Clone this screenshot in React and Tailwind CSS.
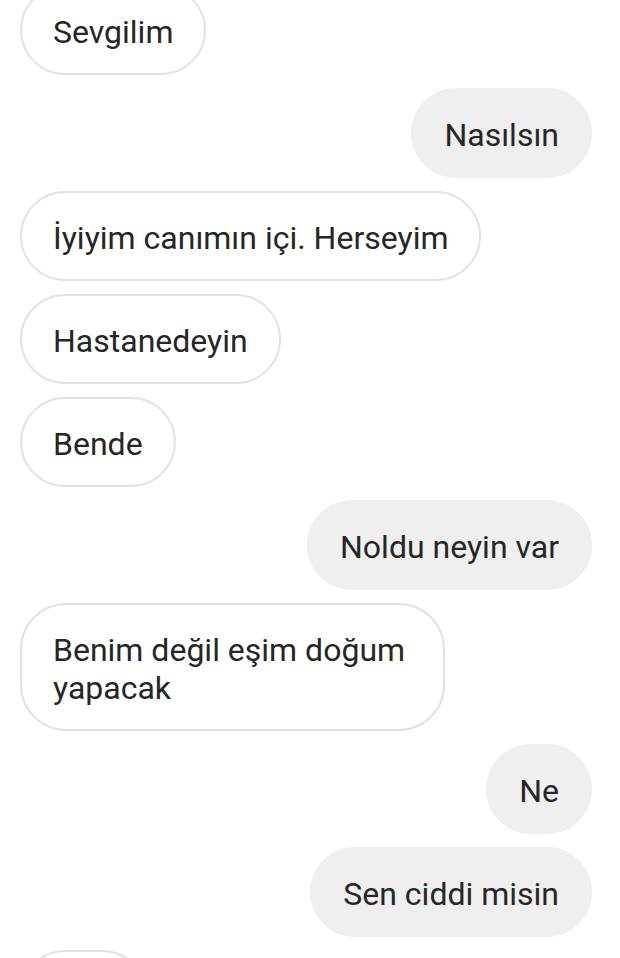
const messages = [
  { text: "Sevgilim", me: false },
  { text: "Nasılsın", me: true },
  { text: "İyiyim canımın içi. Herseyim", me: false },
  { text: "Hastanedeyin", me: false },
  { text: "Bende", me: false },
  { text: "Noldu neyin var", me: true },
  { text: "Benim değil eşim doğum yapacak", me: false, wide: true },
  { text: "Ne", me: true },
  { text: "Sen ciddi misin", me: true },
  { text: "Evet", me: false },
];

const Bubble = ({ text, me, wide }) => (
  <div className={me ? "flex justify-end" : "flex justify-start"}>
    <div
      className={
        (me
          ? "bg-[#efefef] border-2 border-[#efefef] "
          : "bg-white border-2 border-[#e3e3e3] ") +
        (wide ? "w-[425px] " : "") +
        "rounded-[46px] px-[31px] pt-[26px] pb-[22px] text-[32px] leading-[38px] text-[#262626]"
      }
    >
      {text}
    </div>
  </div>
);

export default function App() {
  return (
    <div
      className="w-[620px] h-[958px] overflow-hidden bg-white"
      style={{ fontFamily: "Roboto, 'Noto Sans', sans-serif" }}
    >
      <div className="flex flex-col gap-[13px] pl-[20px] pr-[28px] mt-[-15px]">
        {messages.map((m, i) => (
          <Bubble key={i} {...m} />
        ))}
      </div>
    </div>
  );
}
